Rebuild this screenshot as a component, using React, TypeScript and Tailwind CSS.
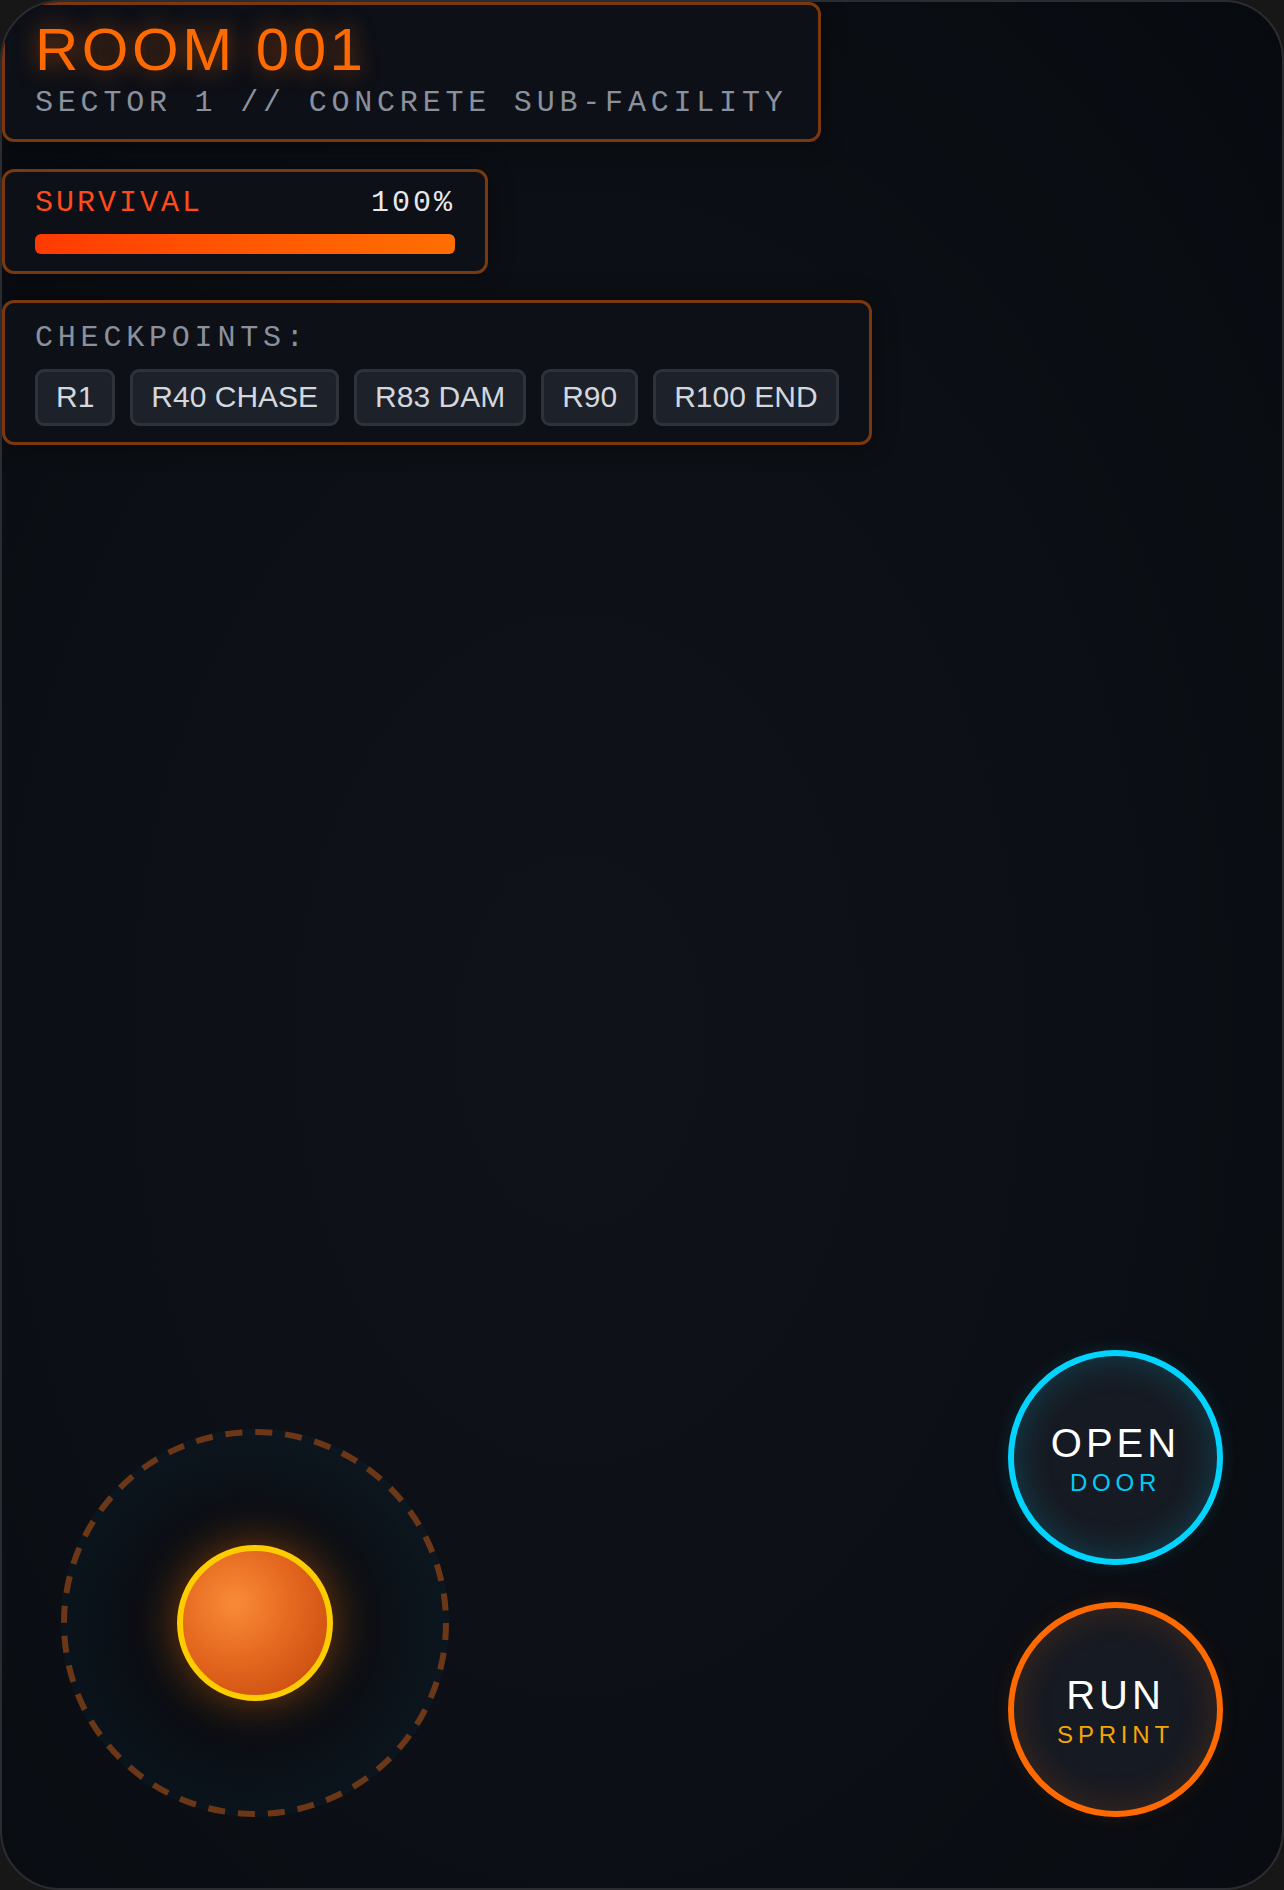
import React from "react";

const mono = "font-['Liberation_Mono','DejaVu_Sans_Mono',monospace]";
const sans = "font-['Liberation_Sans',Arial,sans-serif]";

const checkpoints = ["R1", "R40 CHASE", "R83 DAM", "R90", "R100 END"];

function Panel({ children, className = "" }: { children: React.ReactNode; className?: string }) {
    return (
        <div className={`w-fit rounded-[12px] border-[3px] border-[#7a380f] bg-[#0d1017] px-[30px] shadow-[0_0_24px_rgba(0,0,0,0.45)] ${className}`}>
            {children}
        </div>
    );
}

function ActionButton({ top, bottom, ring, sub }: { top: string; bottom: string; ring: string; sub: string }) {
    return (
        <button className={`flex h-[215px] w-[215px] flex-col items-center justify-center rounded-full border-[6px] bg-[#161a22] pt-[3px] ${ring}`}>
            <span className={`${sans} text-[40px] leading-[40px] tracking-[4px] text-white`}>{top}</span>
            <span className={`${sans} mt-[8px] text-[24px] leading-[24px] tracking-[4.8px] ${sub}`}>{bottom}</span>
        </button>
    );
}

export default function App() {
    return (
        <div className="min-h-screen bg-[#171717]">
            <div className="flex h-[1890px] w-[1284px] flex-col overflow-hidden rounded-[60px] border-2 border-[#2a2c31] bg-[radial-gradient(ellipse_at_45%_55%,#0f1319_0%,#0c0f15_55%,#070a0f_100%)]">
                <div className="flex flex-col items-start gap-[26px]">
                    {/* room header */}
                    <Panel className="pt-[15px] pb-[21px]">
                        <div className={`${sans} text-[60px] leading-[60px] tracking-[3.5px] text-[#ff6a00] [text-shadow:0_0_22px_rgba(255,106,0,0.55)]`}>
                            ROOM 001
                        </div>
                        <div className={`${mono} mt-[8px] text-[30px] leading-[30px] tracking-[4.8px] text-[#8a919c]`}>
                            SECTOR 1 // CONCRETE SUB-FACILITY
                        </div>
                    </Panel>

                    {/* survival meter */}
                    <Panel className="mt-[1px] pt-[16px] pb-[17px]">
                        <div className="w-[420px]">
                            <div className={`${mono} flex justify-between text-[30px] leading-[30px] tracking-[3px]`}>
                                <span className="text-[#ff4a1a]">SURVIVAL</span>
                                <span className="text-[#e6e8ec]">100%</span>
                            </div>
                            <div className="mt-[16px] h-[20px] w-full rounded-[6px] bg-gradient-to-r from-[#ff3a00] to-[#ff6e00]" />
                        </div>
                    </Panel>

                    {/* checkpoints */}
                    <Panel className="pt-[20px] pb-[16px]">
                        <div className={`${mono} text-[30px] leading-[30px] tracking-[4.8px] text-[#8a919c]`}>CHECKPOINTS:</div>
                        <div className="mt-[16px] flex gap-[15px]">
                            {checkpoints.map((c) => (
                                <span
                                    key={c}
                                    className={`${sans} rounded-[9px] border-[3px] border-[#2e333b] bg-[#1d2129] px-[18px] pt-[8px] pb-[10px] text-[30px] leading-[33px] text-[#d3d7de]`}
                                >
                                    {c}
                                </span>
                            ))}
                        </div>
                    </Panel>
                </div>

                {/* controls */}
                <div className="mt-auto flex items-end justify-between px-[59px] pb-[71px]">
                    <div className="relative flex h-[388px] w-[388px] items-center justify-center rounded-full bg-[radial-gradient(circle,rgba(0,0,0,0.2)_0%,rgba(0,0,0,0.08)_40%,rgba(0,160,220,0.09)_100%)]">
                        <svg className="absolute inset-0" width="388" height="388" viewBox="0 0 388 388">
                            <circle cx="194" cy="194" r="191" fill="none" stroke="#6b3716" strokeWidth="6" strokeDasharray="17 13" />
                        </svg>
                        <div className="h-[156px] w-[156px] rounded-full border-[6px] border-[#ffcc00] bg-[radial-gradient(circle_at_36%_36%,#f98b38_0%,#e4681f_45%,#c2440c_100%)] shadow-[0_0_45px_rgba(255,120,0,0.45)]" />
                    </div>

                    <div className="flex flex-col gap-[37px]">
                        <ActionButton
                            top="OPEN"
                            bottom="DOOR"
                            ring="border-[#00d4ff] shadow-[inset_0_0_36px_rgba(0,212,255,0.22),0_0_18px_rgba(0,212,255,0.12)]"
                            sub="text-[#00ccf5]"
                        />
                        <ActionButton
                            top="RUN"
                            bottom="SPRINT"
                            ring="border-[#ff6a00] shadow-[inset_0_0_36px_rgba(255,106,0,0.18),0_0_18px_rgba(255,106,0,0.1)]"
                            sub="text-[#f5a50a]"
                        />
                    </div>
                </div>
            </div>
        </div>
    );
}
